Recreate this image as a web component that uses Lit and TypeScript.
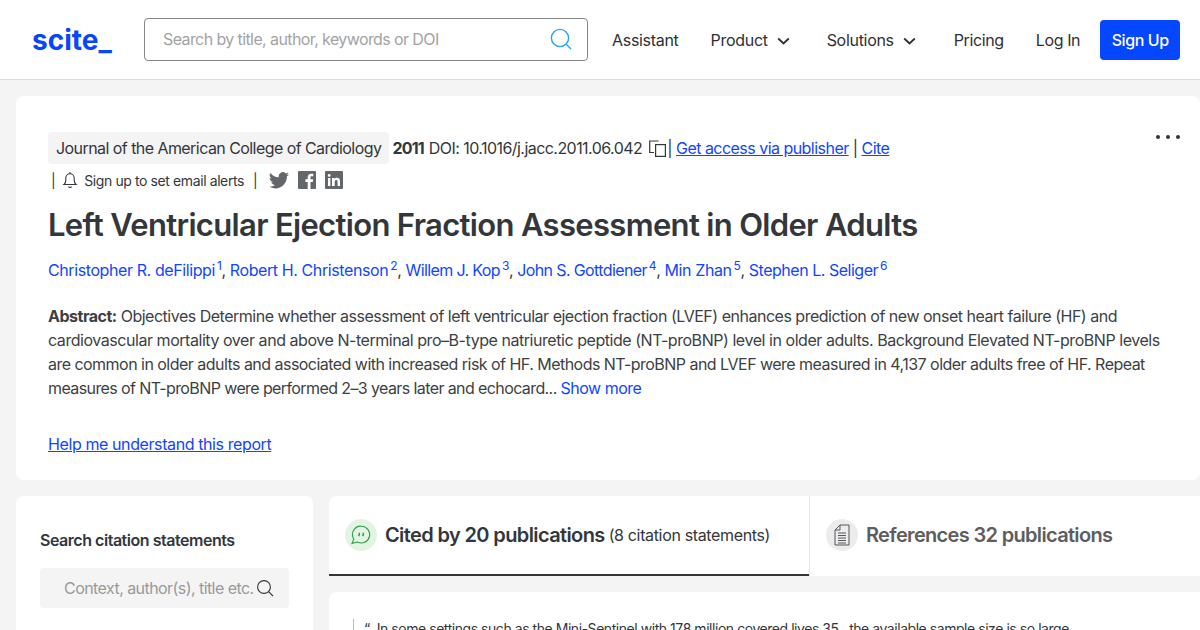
import { LitElement, html, css } from "lit";
import { customElement } from "lit/decorators.js";

@customElement("app-root")
export class AppRoot extends LitElement {
  static styles = css`
    :host { display: block; width: 1200px; height: 630px; overflow: hidden; background: #f4f4f4; font-family: Inter, "Liberation Sans", sans-serif; color: #33363b; font-size: 16px; }
    * { box-sizing: border-box; }
    a { color: #0f46ff; }
    header { height: 80px; background: #fff; border-bottom: 1px solid #dcdcdc; display: flex; align-items: center; padding: 0 20px 0 32px; }
    .logo { font-weight: 700; font-size: 28px; color: #0546ff; width: 112px; flex: none; line-height: 30px; }
    .search { width: 444px; height: 43px; flex: none; border: 1px solid #85868a; border-radius: 4px; display: flex; align-items: center; justify-content: space-between; padding: 0 14px 2px 18px; font-size: 16px; color: #a3a3a3; letter-spacing: -0.6px; }
    nav { display: flex; align-items: center; margin-left: 24px; color: #2e3034; letter-spacing: -0.3px; white-space: nowrap; }
    nav span { display: flex; align-items: center; }
    .chev { margin-left: 9px; margin-top: 2px; }
    .g32 { margin-left: 32px; }
    .g37 { margin-left: 37px; }
    .g38 { margin-left: 38px; }
    nav .narrow { letter-spacing: -0.38px; }
    .signup { background: #0546ff; color: #fff; border-radius: 4px; height: 40px; width: 80px; justify-content: center; font-weight: 500; margin-left: 20px; letter-spacing: -0.4px; }
    .top { margin: 16px 0 0 16px; height: 384px; background: #fff; border-radius: 8px; padding: 36px 32px 0; position: relative; }
    .dots { position: absolute; left: 1140px; top: 39px; display: flex; gap: 6px; }
    .dots i { width: 4px; height: 4px; border-radius: 50%; background: #33363b; }
    .meta { display: flex; align-items: center; height: 32px; letter-spacing: -0.53px; white-space: nowrap; }
    .meta b { font-weight: 700; letter-spacing: -0.8px; }
    .doi { margin-left: 5px; letter-spacing: -0.555px; }
    .pill { background: #f4f4f4; border-radius: 4px; height: 32px; padding: 0 8px; display: flex; align-items: center; margin-right: 3px; letter-spacing: -0.56px; }
    .copy { margin: 0 1px 0 7px; }
    .sep { margin: 0 4px; }
    .alerts { display: flex; align-items: center; height: 32px; font-size: 14px; letter-spacing: -0.4px; padding-left: 3px; white-space: nowrap; }
    .bell { margin: 0 6px 0 7px; }
    .bar2 { margin-left: 9px; }
    .soc { display: flex; align-items: center; gap: 9px; margin-left: 12px; }
    h1 { margin: 8px 0 0; font-size: 31px; line-height: 42px; font-weight: 600; letter-spacing: -0.67px; white-space: nowrap; color: #33363b; }
    .authors { margin-top: 12px; line-height: 24px; letter-spacing: -0.4px; white-space: nowrap; color: #0f46ff; }
    .authors sup { font-size: 12px; line-height: 0; margin-left: 2px; }
    .authors .c { color: #33363b; }
    .authors .tight { letter-spacing: -0.62px; }
    .authors .last { letter-spacing: -0.48px; }
    .abs { margin-top: 22px; line-height: 24px; color: #3c3f44; width: 1120px; }
    .abs div { white-space: nowrap; }
    .abs b { font-weight: 700; }
    .l1 { letter-spacing: -0.49px; }
    .l2 { letter-spacing: -0.45px; }
    .l3 { letter-spacing: -0.53px; }
    .l4 { letter-spacing: -0.6px; }
    .more { color: #0f46ff; letter-spacing: -0.5px; }
    .help { display: block; margin-top: 32px; line-height: 24px; letter-spacing: -0.4px; }
    .bottom { display: flex; margin: 16px 0 0 16px; gap: 16px; align-items: flex-start; }
    .side { width: 297px; height: 200px; background: #fff; border-radius: 8px; padding: 32px 24px; flex: none; }
    .side b { display: block; font-weight: 600; line-height: 24px; letter-spacing: -0.47px; }
    .sinput { margin-top: 16px; height: 40px; background: #f4f4f4; border-radius: 4px; display: flex; align-items: center; padding-left: 24px; color: #9a9a9a; letter-spacing: -0.56px; white-space: nowrap; gap: 2px; }
    .main { flex: 1; }
    .tabs { display: flex; height: 80px; background: #fff; border-radius: 8px 0 0 0; }
    .tab { display: flex; align-items: center; padding: 0 0 0 16px; white-space: nowrap; }
    .t1 { width: 480px; border-bottom: 2px solid #33363b; }
    .t2 { flex: 1; border-left: 1px solid #e4e4e4; color: #5c5d60; padding-bottom: 2px; }
    .circle { width: 32px; height: 32px; border-radius: 50%; display: flex; align-items: center; justify-content: center; margin-right: 8px; flex: none; }
    .green { background: #e2f5e2; }
    .grey { background: #ececec; }
    .tab b { font-size: 20px; font-weight: 600; letter-spacing: -0.62px; }
    .tab.t2 b { letter-spacing: -0.67px; }
    .tab small { font-size: 16px; margin-left: 4px; letter-spacing: -0.35px; }
    .stmt { margin-top: 16px; height: 100px; background: #fff; border-radius: 8px 0 0 0; padding: 27px 0 0 24px; }
    .stmt div { border-left: 1px solid #bbb; padding-left: 10px; font-size: 14px; line-height: 20px; letter-spacing: -0.45px; white-space: pre; }
  `;

  render() {
    const chev = html`<svg class="chev" width="13" height="8" viewBox="0 0 13 8" fill="none" stroke="#2e3034" stroke-width="1.8"><path d="M1.200 1.500 6.500 6.500 11.800 1.500"/></svg>`;
    return html`
      <header>
        <div class="logo">scite_</div>
        <div class="search">Search by title, author, keywords or DOI
          <svg width="24" height="24" viewBox="0 0 24 24" fill="none" stroke="#2aa3f0" stroke-width="1.4"><circle cx="11" cy="11" r="8.600"/><path d="M17.200 17.200 22 22"/></svg>
        </div>
        <nav>
          <span>Assistant</span>
          <span class="g32">Product${chev}</span>
          <span class="g37">Solutions${chev}</span>
          <span class="g38 narrow">Pricing</span>
          <span class="g32 narrow">Log In</span>
          <span class="signup">Sign Up</span>
        </nav>
      </header>
      <section class="top">
        <div class="dots"><i></i><i></i><i></i></div>
        <div class="meta"><span class="pill">Journal of the American College of Cardiology</span><b>2011</b><span class="doi">DOI: 10.1016/j.jacc.2011.06.042</span><svg class="copy" width="17" height="17" viewBox="0 0 17 17" fill="none" stroke="#33363b" stroke-width="1.200"><path d="M9.500 1H.7v11.500H5"/><rect x="6.600" y="4.600" width="9.800" height="11.800"/></svg><span>|</span><a class="sep" href="#">Get access via publisher</a><span>|</span><a class="sep" href="#">Cite</a></div>
        <div class="alerts"><span>|</span><svg class="bell" width="16" height="18" viewBox="0 0 16 18" fill="none" stroke="#33363b" stroke-width="1.100"><path d="M2 13.500c1.400-1 1.800-2 1.800-4.500V7a4.200 4.200 0 0 1 8.400 0v2c0 2.500.4 3.500 1.800 4.500z"/><path d="M6.500 15.500a1.600 1.600 0 0 0 3 0M8 1v1.500"/></svg><span>Sign up to set email alerts</span><span class="bar2">|</span>
          <span class="soc">
            <svg width="20" height="17" viewBox="0 0 24 20" fill="#63666a"><path d="M24 2.400a9.800 9.800 0 0 1-2.800.8A4.900 4.900 0 0 0 23.300.5a9.800 9.800 0 0 1-3.100 1.200 4.900 4.900 0 0 0-8.400 4.500A14 14 0 0 1 1.700.9a4.900 4.900 0 0 0 1.500 6.600 4.900 4.900 0 0 1-2.200-.6v.1a4.900 4.900 0 0 0 3.900 4.800 4.900 4.900 0 0 1-2.200.1 4.900 4.900 0 0 0 4.600 3.400A9.900 9.900 0 0 1 0 17.300 14 14 0 0 0 7.500 19.500c9 0 14-7.500 14-14v-.6A10 10 0 0 0 24 2.400z"/></svg>
            <svg width="18" height="18" viewBox="0 0 18 18"><rect width="18" height="18" rx="1" fill="#63666a"/><path fill="#fff" d="M12.500 18v-7h2.300l.4-2.700h-2.700V6.600c0-.8.2-1.300 1.300-1.300h1.500V2.900c-.3 0-1.100-.1-2.100-.1-2.100 0-3.500 1.300-3.500 3.600v1.900H7.400V11h2.300v7z"/></svg>
            <svg width="18" height="18" viewBox="0 0 18 18"><rect width="18" height="18" rx="1" fill="#63666a"/><path fill="#fff" d="M3 7h2.400v8H3zM4.200 3a1.400 1.400 0 1 1 0 2.800 1.400 1.400 0 0 1 0-2.800zM7 7h2.300v1.100c.4-.7 1.300-1.300 2.600-1.300 2.500 0 3.100 1.600 3.100 3.800V15h-2.400v-3.900c0-1-.1-2.200-1.400-2.200s-1.500 1-1.500 2.100v4H7z"/></svg>
          </span>
        </div>
        <h1>Left Ventricular Ejection Fraction Assessment in Older Adults</h1>
        <div class="authors">Christopher R. deFilippi<sup>1</sup><span class="c">, </span>Robert H. Christenson<sup>2</sup><span class="c">, </span><span class="tight">Willem J. Kop</span><sup>3</sup><span class="c">, </span><span class="tight">John S. Gottdiener</span><sup>4</sup><span class="c">, </span>Min Zhan<sup>5</sup><span class="c">, </span><span class="last">Stephen L. Seliger</span><sup>6</sup></div>
        <div class="abs">
          <div class="l1"><b>Abstract:</b> Objectives Determine whether assessment of left ventricular ejection fraction (LVEF) enhances prediction of new onset heart failure (HF) and</div>
          <div class="l2">cardiovascular mortality over and above N-terminal pro–B-type natriuretic peptide (NT-proBNP) level in older adults. Background Elevated NT-proBNP levels</div>
          <div class="l3">are common in older adults and associated with increased risk of HF. Methods NT-proBNP and LVEF were measured in 4,137 older adults free of HF. Repeat</div>
          <div class="l4">measures of NT-proBNP were performed 2–3 years later and echocard... <span class="more">Show more</span></div>
        </div>
        <a class="help" href="#">Help me understand this report</a>
      </section>
      <div class="bottom">
        <aside class="side">
          <b>Search citation statements</b>
          <div class="sinput">Context, author(s), title etc.<svg width="18" height="18" viewBox="0 0 18 18" fill="none" stroke="#33363b" stroke-width="1.100"><circle cx="8" cy="8" r="6.400"/><path d="M12.600 12.600 17 17"/></svg></div>
        </aside>
        <div class="main">
          <div class="tabs">
            <div class="tab t1"><span class="circle green"><svg width="20" height="20" viewBox="0 0 20 20" fill="none" stroke="#2f9e44" stroke-width="1.100"><path d="M10.500 1.200a8.400 8.400 0 1 1-4.200 15.800L1 18.400l1.800-4.300A8.400 8.400 0 0 1 10.500 1.200z"/><path stroke-width="1.500" d="M8.300 7.800v1.800l-.6 1.500M12.300 7.800v1.800l-.6 1.500"/></svg></span><b>Cited by 20 publications</b><small>(8 citation statements)</small></div>
            <div class="tab t2"><span class="circle grey"><svg width="16" height="22" viewBox="0 0 16 22" fill="none" stroke="#55575a" stroke-width="1"><path d="M6 1h9v20H1V6z"/><path d="M6 1v5H1"/><path d="M4 9h8M4 11.500h8M4 14h8M4 16.500h8M4 19h8"/></svg></span><b>References 32 publications</b></div>
          </div>
          <div class="stmt"><div>“  In some settings such as the Mini-Sentinel with 178 million covered lives 35 , the available sample size is so large</div></div>
        </div>
      </div>
    `;
  }
}
